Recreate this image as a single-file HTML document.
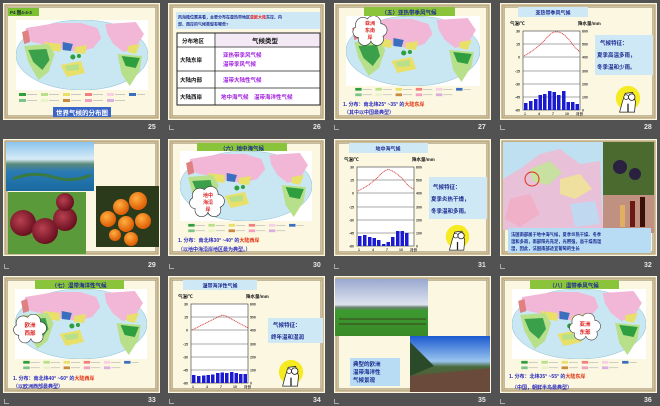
<!DOCTYPE html>
<html><head><meta charset="utf-8"><style>
html,body{margin:0;padding:0;background:#525252;width:660px;height:406px;overflow:hidden;font-family:"Liberation Sans","Noto Sans CJK SC",sans-serif}
.s{position:absolute;width:157px;height:117px}
.n{position:absolute;color:#e6e6e6;font-size:7px;font-weight:bold}
.i{position:absolute;width:4px;height:4px;border:1px solid #aaa;border-top:none;border-right:none}
svg text{font-family:"Liberation Sans","Noto Sans CJK SC",sans-serif;font-weight:bold}
</style></head><body>
<svg width="0" height="0" style="position:absolute">
<defs>
<symbol id="fr" viewBox="0 0 157 117">
<rect x="0" y="0" width="157" height="117" fill="#fbf7e0"/>
<rect x="2.5" y="2.5" width="152" height="112" fill="none" stroke="#bfae86" stroke-width="2.5"/>
<rect x="4.3" y="4.3" width="148.4" height="108.4" fill="none" stroke="#8f7f5c" stroke-width="0.5"/>
</symbol>
<symbol id="m" viewBox="0 0 130 70" preserveAspectRatio="none">
<rect width="130" height="70" fill="#fff"/>
<ellipse cx="65" cy="35" rx="65" ry="35" fill="#c8e7f3" stroke="#9bc7d6" stroke-width="0.6"/>
<path d="M10 8 L40 3 L64 3 L80 8 L84 18 L76 28 L62 32 L48 30 L34 26 L16 22 L8 16Z" fill="#f2b6d6"/>
<path d="M28 22 L44 24 L44 32 L30 30Z" fill="#e9e06a"/>
<path d="M46 22 L56 24 L54 31 L46 30Z" fill="#3a6fc0"/>
<path d="M58 27 L70 25 L68 34 L58 33Z" fill="#e9e06a"/>
<path d="M88 4 L118 2 L126 14 L118 28 L106 32 L96 24 L90 14Z" fill="#f2b6d6"/>
<path d="M110 26 L122 24 L118 34 L110 32Z" fill="#e9e06a"/>
<path d="M8 26 L32 24 L38 34 L32 52 L22 60 L12 42Z" fill="#b8e08a"/>
<path d="M12 30 L30 29 L33 40 L26 50 L17 42Z" fill="#3aa04a"/>
<path d="M100 34 L124 36 L122 50 L112 66 L104 54Z" fill="#b8e08a"/>
<path d="M104 36 L122 38 L118 48 L108 46Z" fill="#2e9e3e"/>
<path d="M44 45 L64 41 L68 53 L50 57Z" fill="#e9e06a"/>
<path d="M48 46 L62 44 L62 50 L50 51Z" fill="#b8e08a"/>
<circle cx="56" cy="37" r="2.5" fill="#2e9e3e"/><circle cx="62" cy="36" r="2" fill="#2e9e3e"/>
<path d="M6 12 L12 10 L14 22 L8 24Z" fill="#e08080"/>
</symbol>
<symbol id="lg" viewBox="0 0 130 12">
<rect x="2" y="1" width="7" height="3" fill="#2e9e3e"/>
<rect x="24" y="1" width="7" height="3" fill="#b8e08a"/><rect x="46" y="1" width="7" height="3" fill="#e9e06a"/>
<rect x="68" y="1" width="7" height="3" fill="#f08080"/><rect x="90" y="1" width="7" height="3" fill="#f8d0e4"/><rect x="112" y="1" width="7" height="3" fill="#3a6fc0"/>
<rect x="2" y="7" width="7" height="3" fill="#7cc48a"/><rect x="24" y="7" width="7" height="3" fill="#e8f4c8"/><rect x="46" y="7" width="7" height="3" fill="#c88a40"/>
<rect x="68" y="7" width="7" height="3" fill="#f0a0c0"/><rect x="90" y="7" width="7" height="3" fill="#d8b0e0"/>
<g stroke="#aaa" stroke-width="0.6"><line x1="10" y1="2.5" x2="20" y2="2.5"/><line x1="32" y1="2.5" x2="42" y2="2.5"/><line x1="54" y1="2.5" x2="64" y2="2.5"/><line x1="76" y1="2.5" x2="86" y2="2.5"/><line x1="98" y1="2.5" x2="108" y2="2.5"/><line x1="120" y1="2.5" x2="128" y2="2.5"/><line x1="10" y1="8.5" x2="20" y2="8.5"/><line x1="32" y1="8.5" x2="42" y2="8.5"/><line x1="54" y1="8.5" x2="64" y2="8.5"/><line x1="76" y1="8.5" x2="86" y2="8.5"/><line x1="98" y1="8.5" x2="108" y2="8.5"/></g>
</symbol>
<symbol id="ct" viewBox="0 0 30 30">
<circle cx="15" cy="14" r="13" fill="#f6ea20"/>
<path d="M6 29 L9 18 L12 9 L20 8 L23 18 L22 29Z" fill="#fff" stroke="#222" stroke-width="0.8"/>
<circle cx="19" cy="13" r="3.5" fill="#fff" stroke="#222" stroke-width="0.9"/>
<circle cx="13" cy="13" r="2.5" fill="#fff" stroke="#222" stroke-width="0.8"/>
<path d="M15 20 L15 29" stroke="#222" stroke-width="1.4"/>
</symbol>
<symbol id="cl" viewBox="0 0 40 34">
<g fill="none" stroke="#333" stroke-width="1.4"><circle cx="12" cy="10" r="8"/><circle cx="24" cy="8" r="8"/><circle cx="32" cy="16" r="7"/><circle cx="28" cy="26" r="7"/><circle cx="14" cy="26" r="7"/><circle cx="7" cy="18" r="6"/></g>
<g fill="#fff"><circle cx="12" cy="10" r="8"/><circle cx="24" cy="8" r="8"/><circle cx="32" cy="16" r="7"/><circle cx="28" cy="26" r="7"/><circle cx="14" cy="26" r="7"/><circle cx="7" cy="18" r="6"/><circle cx="20" cy="18" r="10"/></g>
</symbol>
<symbol id="ax" viewBox="0 0 157 117">
<rect x="23" y="28" width="57" height="79" fill="#fff" stroke="#333" stroke-width="0.6"/>
<g stroke="#555" stroke-width="0.5"><line x1="23" y1="41" x2="80" y2="41"/><line x1="23" y1="54" x2="80" y2="54"/><line x1="23" y1="68" x2="80" y2="68"/><line x1="23" y1="81" x2="80" y2="81"/><line x1="23" y1="94" x2="80" y2="94"/></g>
<g font-size="3.5" fill="#333" font-weight="normal" text-anchor="end"><text x="20" y="29.5">30</text><text x="20" y="42.5">15</text><text x="20" y="55.5">0</text><text x="20" y="69.5">-15</text><text x="20" y="82.5">-30</text><text x="20" y="95.5">-45</text><text x="20" y="108.5">-60</text></g>
<g font-size="3.5" fill="#333"><text x="82" y="29.5">600</text><text x="82" y="42.5">500</text><text x="82" y="55.5">400</text><text x="82" y="69.5">300</text><text x="82" y="82.5">200</text><text x="82" y="95.5">100</text><text x="82" y="108.5">0</text></g>
<g font-size="3.5" fill="#333"><text x="24" y="112">1</text><text x="38" y="112">4</text><text x="52" y="112">7</text><text x="65" y="112">10</text><text x="76" y="112">月份</text></g>
<text x="10" y="22" font-size="4.5" fill="#111">气温/℃</text>
<text x="78" y="22" font-size="4.5" fill="#111">降水量/mm</text>
</symbol>
</defs></svg>

<!-- Slide 25 -->
<svg class="s" style="left:3px;top:3px" viewBox="0 0 157 117"><use href="#fr"/>
<rect x="5" y="5" width="31" height="8" fill="#7cc230"/><text x="7" y="11" font-size="4.5" fill="#123">P4 图4-4-3</text>
<use href="#m" x="13" y="17" width="132" height="70"/>
<use href="#lg" x="14" y="89" width="130" height="12"/>
<rect x="50" y="104" width="58" height="10" fill="#3a66c8"/><text x="79" y="112" font-size="6.5" fill="#fff" text-anchor="middle">世界气候的分布图</text>
</svg>
<div class="n" style="left:148px;top:124px">25</div>

<!-- Slide 26 -->
<svg class="s" style="left:168px;top:3px" viewBox="0 0 157 117"><use href="#fr"/>
<rect x="8" y="9" width="144" height="17" fill="#cfe8f6"/>
<text x="10" y="15.5" font-size="4" fill="#1a2a90">风海陆位置来看，主要分布在亚热带地区<tspan fill="#e02020">亚欧大陆</tspan>东岸、内</text>
<text x="10" y="22.5" font-size="4" fill="#1a2a90">部、西岸的气候类型有哪些?</text>
<rect x="9" y="30" width="143" height="72" fill="#fff" stroke="#222" stroke-width="1"/>
<rect x="48" y="30.5" width="103.5" height="13" fill="#f3eaf5"/>
<g stroke="#222" stroke-width="0.8"><line x1="47" y1="30" x2="47" y2="102"/><line x1="9" y1="44" x2="152" y2="44"/><line x1="9" y1="68" x2="152" y2="68"/><line x1="9" y1="85" x2="152" y2="85"/></g>
<text x="14" y="40" font-size="5.5" fill="#111">分布地区</text><text x="84" y="40" font-size="6.5" fill="#111">气候类型</text>
<text x="12" y="59" font-size="5.5" fill="#111">大陆东岸</text><text x="12" y="79" font-size="5.5" fill="#111">大陆内部</text><text x="12" y="96" font-size="5.5" fill="#111">大陆西岸</text>
<g font-size="5.5" fill="#a020e0"><text x="55" y="54">亚热带季风气候</text><text x="55" y="63">温带季风气候</text><text x="55" y="79">温带大陆性气候</text><text x="53" y="96">地中海气候　温带海洋性气候</text></g>
</svg>
<div class="n" style="left:313px;top:124px">26</div><div class="i" style="left:169px;top:125px"></div>

<!-- Slide 27 -->
<svg class="s" style="left:334px;top:3px" viewBox="0 0 157 117"><use href="#fr"/>
<rect x="30" y="4" width="91" height="10" fill="#8ac43a"/><text x="75" y="11.5" font-size="5.5" fill="#1a2a90" text-anchor="middle">（五）亚热带季风气候</text>
<use href="#m" x="12" y="13" width="134" height="70"/>
<use href="#lg" x="12" y="84" width="134" height="11"/>
<use href="#cl" x="18" y="13" width="36" height="30"/>
<text x="36" y="22" font-size="5" fill="#e02020" text-anchor="middle">亚洲</text><text x="36" y="29" font-size="5" fill="#e02020" text-anchor="middle">东南</text><text x="36" y="36" font-size="5" fill="#e02020" text-anchor="middle">岸</text>
<text x="9" y="103" font-size="5" fill="#2a2ac0">1. 分布：南北纬25° ~35° 的<tspan fill="#e03010">大陆东岸</tspan></text>
<text x="10" y="111" font-size="5" fill="#2a2ac0">（其中以中国最典型）</text>
</svg>
<div class="n" style="left:478px;top:124px">27</div><div class="i" style="left:334px;top:125px"></div>

<!-- Slide 28 -->
<svg class="s" style="left:500px;top:3px" viewBox="0 0 157 117"><use href="#fr"/>
<rect x="18" y="4" width="70" height="10" fill="#cfe8f6"/><text x="53" y="11.5" font-size="5" fill="#1a2a90" text-anchor="middle">亚热带季风气候</text>
<use href="#ax"/>
<g fill="#1a1ad0"><rect x="24" y="100" width="3.5" height="7"/><rect x="29" y="98" width="3.5" height="9"/><rect x="34" y="96" width="3.5" height="11"/><rect x="38.5" y="92" width="3.5" height="15"/><rect x="43" y="91" width="3.5" height="16"/><rect x="48" y="88" width="3.5" height="19"/><rect x="52.5" y="89" width="3.5" height="18"/><rect x="57" y="92" width="3.5" height="15"/><rect x="62" y="88" width="3.5" height="19"/><rect x="66.5" y="99" width="3.5" height="8"/><rect x="71" y="99" width="3.5" height="8"/><rect x="75.5" y="101" width="3.5" height="6"/></g>
<path d="M24 53 Q35 47 44 38 Q52 28 56 29 Q62 28 70 38 Q76 46 80 49" fill="none" stroke="#d03030" stroke-width="0.8" stroke-dasharray="1.2 0.6"/>
<rect x="95" y="32" width="58" height="40" fill="#cfe8f6"/>
<text x="100" y="42" font-size="5.5" fill="#1a2a90">气候特征：</text><text x="97" y="54" font-size="5.5" fill="#1a2a90">夏季高温多雨，</text><text x="97" y="66" font-size="5.5" fill="#1a2a90">冬季温和少雨。</text>
<use href="#ct" x="114" y="82" width="28" height="28"/>
</svg>
<div class="n" style="left:644px;top:124px">28</div><div class="i" style="left:500px;top:125px"></div>

<!-- Slide 29 -->
<svg class="s" style="left:3px;top:139px" viewBox="0 0 157 117"><use href="#fr"/>
<defs><linearGradient id="lk" x1="0" y1="0" x2="0" y2="1"><stop offset="0" stop-color="#8ac4ee"/><stop offset="0.35" stop-color="#d8ecf6"/><stop offset="0.45" stop-color="#5a8a7a"/><stop offset="0.6" stop-color="#2a7ab4"/><stop offset="1" stop-color="#1a6aa0"/></linearGradient>
<radialGradient id="ym" cx="0.4" cy="0.4" r="0.6"><stop offset="0" stop-color="#b84050"/><stop offset="1" stop-color="#6a1020"/></radialGradient>
<radialGradient id="og" cx="0.4" cy="0.35" r="0.6"><stop offset="0" stop-color="#ffb040"/><stop offset="1" stop-color="#e06008"/></radialGradient></defs>
<rect x="3" y="3" width="88" height="49" fill="url(#lk)"/>
<path d="M10 40 Q30 32 50 38 Q70 44 88 36" stroke="#3a7a40" stroke-width="3" fill="none"/>
<rect x="5" y="53" width="78" height="62" fill="#5a9a3a"/>
<circle cx="20" cy="84" r="13" fill="url(#ym)"/><circle cx="42" cy="92" r="13" fill="url(#ym)"/><circle cx="62" cy="80" r="12" fill="url(#ym)"/><circle cx="62" cy="63" r="9" fill="url(#ym)"/>
<rect x="93" y="47" width="63" height="61" fill="#2a3a1a"/>
<circle cx="105" cy="80" r="8" fill="url(#og)"/><circle cx="118" cy="68" r="8" fill="url(#og)"/><circle cx="135" cy="62" r="9" fill="url(#og)"/><circle cx="123" cy="85" r="8" fill="url(#og)"/><circle cx="140" cy="82" r="8" fill="url(#og)"/><circle cx="128" cy="100" r="7" fill="url(#og)"/><circle cx="112" cy="96" r="6" fill="url(#og)"/>
</svg>
<div class="n" style="left:148px;top:262px">29</div><div class="i" style="left:4px;top:264px"></div>

<!-- Slide 30 -->
<svg class="s" style="left:168px;top:139px" viewBox="0 0 157 117"><use href="#fr"/>
<rect x="29" y="4" width="90" height="10" fill="#8ac43a"/><text x="74" y="11.5" font-size="5.5" fill="#1a2a90" text-anchor="middle">（六）地中海气候</text>
<use href="#m" x="12" y="12" width="132" height="70"/>
<use href="#lg" x="12" y="84" width="132" height="11"/>
<use href="#cl" x="21" y="46" width="36" height="34"/>
<text x="40" y="58" font-size="5" fill="#e02020" text-anchor="middle">地中</text><text x="40" y="65" font-size="5" fill="#e02020" text-anchor="middle">海沿</text><text x="40" y="72" font-size="5" fill="#e02020" text-anchor="middle">岸</text>
<text x="10" y="103" font-size="5" fill="#2a2ac0">1. 分布：南北纬30° ~40° 的<tspan fill="#e03010">大陆西岸</tspan></text>
<text x="10" y="112" font-size="5" fill="#2a2ac0">（以地中海沿岸地区最为典型。）</text>
</svg>
<div class="n" style="left:313px;top:262px">30</div><div class="i" style="left:169px;top:264px"></div>

<!-- Slide 31 -->
<svg class="s" style="left:334px;top:139px" viewBox="0 0 157 117"><use href="#fr"/>
<rect x="15" y="4" width="79" height="10" fill="#cfe8f6"/><text x="54" y="11.5" font-size="5" fill="#1a2a90" text-anchor="middle">地中海气候</text>
<use href="#ax"/>
<g fill="#1a1ad0"><rect x="24" y="97" width="3.5" height="10"/><rect x="29" y="96" width="3.5" height="11"/><rect x="34" y="98" width="3.5" height="9"/><rect x="38.5" y="99" width="3.5" height="8"/><rect x="43" y="101" width="3.5" height="6"/><rect x="48" y="105" width="3.5" height="2"/><rect x="52.5" y="103" width="3.5" height="4"/><rect x="57" y="98" width="3.5" height="9"/><rect x="62" y="92" width="3.5" height="15"/><rect x="66.5" y="92" width="3.5" height="15"/><rect x="71" y="94" width="3.5" height="13"/></g>
<path d="M24 52 Q36 46 44 38 Q52 29 56 31 Q64 34 72 44 Q76 49 80 50" fill="none" stroke="#d03030" stroke-width="0.8" stroke-dasharray="1.2 0.6"/>
<rect x="95" y="38" width="58" height="42" fill="#cfe8f6"/>
<text x="99" y="50" font-size="5.5" fill="#1a2a90">气候特征：</text><text x="97" y="62" font-size="5.5" fill="#1a2a90">夏季炎热干燥，</text><text x="97" y="74" font-size="5.5" fill="#1a2a90">冬季温和多雨。</text>
<use href="#ct" x="110" y="85" width="27" height="27"/>
</svg>
<div class="n" style="left:478px;top:262px">31</div><div class="i" style="left:334px;top:264px"></div>

<!-- Slide 32 -->
<svg class="s" style="left:500px;top:139px" viewBox="0 0 157 117"><use href="#fr"/>
<rect x="3" y="3" width="100" height="88" fill="#bfe0f0"/>
<path d="M3 40 L20 30 L40 15 L60 10 L80 25 L100 22 L103 91 L3 91Z" fill="#e8c0d8"/>
<path d="M30 30 L50 22 L62 34 L48 46 L32 42Z" fill="#c8e0a0"/><path d="M60 40 L80 35 L92 50 L75 60 L60 55Z" fill="#f0e0a0"/>
<path d="M10 60 L30 55 L40 75 L20 88 L5 80Z" fill="#f0b0c8"/><path d="M70 65 L95 62 L100 85 L75 88Z" fill="#c0d8f0"/>
<circle cx="32" cy="40" r="7" fill="none" stroke="#e03010" stroke-width="1"/>
<rect x="103" y="3" width="51" height="53" fill="#4a6a30"/><circle cx="120" cy="28" r="7" fill="#2a2040"/><circle cx="135" cy="35" r="6" fill="#2a2040"/>
<rect x="103" y="56" width="51" height="38" fill="#c09080"/><rect x="130" y="62" width="5" height="26" fill="#6a1a10"/><rect x="140" y="58" width="5" height="30" fill="#3a1008"/><rect x="120" y="66" width="5" height="22" fill="#e0b060"/>
<rect x="8" y="89" width="143" height="25" fill="#b8dcf4"/>
<text x="11" y="97" font-size="4.3" fill="#1a2a90">法国南部属于地中海气候，夏季炎热干燥、冬季</text><text x="11" y="104" font-size="4.3" fill="#1a2a90">温和多雨，南部阳光充足，光照强，高干燥而温</text><text x="11" y="111" font-size="4.3" fill="#1a2a90">湿，因此，法国南部适宜葡萄的生长</text>
</svg>
<div class="n" style="left:644px;top:262px">32</div><div class="i" style="left:500px;top:264px"></div>

<!-- Slide 33 -->
<svg class="s" style="left:3px;top:276px" viewBox="0 0 157 117"><use href="#fr"/>
<rect x="32" y="4" width="89" height="10" fill="#8ac43a"/><text x="76" y="11.5" font-size="5.5" fill="#1a2a90" text-anchor="middle">（七）温带海洋性气候</text>
<use href="#m" x="12" y="13" width="132" height="70"/>
<use href="#lg" x="12" y="84" width="132" height="11"/>
<use href="#cl" x="10" y="36" width="34" height="34"/>
<text x="27" y="51" font-size="5.5" fill="#e02020" text-anchor="middle">欧洲</text><text x="27" y="59" font-size="5.5" fill="#e02020" text-anchor="middle">西部</text>
<text x="10" y="104" font-size="5" fill="#2a2ac0">1. 分布：南北纬40° ~60° 的<tspan fill="#e03010">大陆西岸</tspan></text>
<text x="10" y="112" font-size="5" fill="#2a2ac0">（以欧洲西部最典型）</text>
</svg>
<div class="n" style="left:148px;top:397px">33</div><div class="i" style="left:4px;top:399px"></div>

<!-- Slide 34 -->
<svg class="s" style="left:168px;top:276px" viewBox="0 0 157 117"><use href="#fr"/>
<rect x="15" y="4" width="74" height="10" fill="#cfe8f6"/><text x="52" y="11.5" font-size="5" fill="#1a2a90" text-anchor="middle">温带海洋性气候</text>
<use href="#ax" x="0" y="0" width="157" height="117"/>
<g fill="#1a1ad0"><rect x="24" y="99" width="3.5" height="8"/><rect x="29" y="100" width="3.5" height="7"/><rect x="34" y="99.5" width="3.5" height="7.5"/><rect x="38.5" y="99" width="3.5" height="8"/><rect x="43" y="98.5" width="3.5" height="8.5"/><rect x="48" y="97" width="3.5" height="10"/><rect x="52.5" y="96.5" width="3.5" height="10.5"/><rect x="57" y="97" width="3.5" height="10"/><rect x="62" y="96" width="3.5" height="11"/><rect x="66.5" y="97" width="3.5" height="10"/><rect x="71" y="98" width="3.5" height="9"/><rect x="75.5" y="98" width="3.5" height="9"/></g>
<path d="M24 54 L54 39 L58 40 L80 52" fill="none" stroke="#d03030" stroke-width="0.8" stroke-dasharray="1.2 0.6"/>
<rect x="100" y="42" width="55" height="25" fill="#cfe8f6"/>
<text x="105" y="51" font-size="5.5" fill="#1a2a90">气候特征：</text><text x="103" y="63" font-size="5.5" fill="#1a2a90">终年温和湿润</text>
<use href="#ct" x="109" y="83" width="28" height="28"/>
</svg>
<div class="n" style="left:313px;top:397px">34</div><div class="i" style="left:169px;top:399px"></div>

<!-- Slide 35 -->
<svg class="s" style="left:334px;top:276px" viewBox="0 0 157 117"><use href="#fr"/>
<defs><linearGradient id="sk" x1="0" y1="0" x2="0" y2="1"><stop offset="0" stop-color="#9aa8d0"/><stop offset="0.45" stop-color="#dde4ee"/><stop offset="0.5" stop-color="#6a8070"/><stop offset="0.55" stop-color="#3c9a30"/><stop offset="1" stop-color="#3a8a28"/></linearGradient>
<linearGradient id="sk2" x1="0" y1="0" x2="0" y2="1"><stop offset="0" stop-color="#1a5ad0"/><stop offset="0.45" stop-color="#9ac4ee"/><stop offset="0.55" stop-color="#4a6a3a"/><stop offset="1" stop-color="#5a4a3a"/></linearGradient></defs>
<rect x="1" y="3" width="93" height="57" fill="url(#sk)"/>
<g stroke="#3a2a1a" stroke-width="0.8"><line x1="5" y1="43" x2="92" y2="43"/><line x1="5" y1="48" x2="92" y2="48"/></g>
<rect x="76" y="60" width="80" height="56" fill="url(#sk2)"/>
<path d="M76 66 L100 90 L76 100Z" fill="#2a4a2a"/><path d="M76 100 L156 92 L156 116 L76 116Z" fill="#6a4a3a"/>
<rect x="16" y="82" width="50" height="28" fill="#b8dcf4"/>
<text x="19" y="90" font-size="5.5" fill="#1a2a90">典型的欧洲</text><text x="19" y="98" font-size="5.5" fill="#1a2a90">温带海洋性</text><text x="19" y="106" font-size="5.5" fill="#1a2a90">气候景观</text>
</svg>
<div class="n" style="left:478px;top:397px">35</div><div class="i" style="left:334px;top:399px"></div>

<!-- Slide 36 -->
<svg class="s" style="left:500px;top:276px" viewBox="0 0 157 117"><use href="#fr"/>
<rect x="30" y="4" width="89" height="10" fill="#8ac43a"/><text x="74" y="11.5" font-size="5.5" fill="#1a2a90" text-anchor="middle">（八）温带季风气候</text>
<use href="#m" x="12" y="13" width="134" height="70"/>
<use href="#lg" x="12" y="84" width="134" height="11"/>
<use href="#cl" x="69" y="36" width="32" height="30"/>
<text x="85" y="50" font-size="5.5" fill="#e02020" text-anchor="middle">亚洲</text><text x="85" y="58" font-size="5.5" fill="#e02020" text-anchor="middle">东部</text>
<text x="9" y="102" font-size="5" fill="#2a2ac0">1. 分布：北纬35° ~55° 的<tspan fill="#e03010">大陆东岸</tspan></text>
<text x="12" y="113" font-size="5" fill="#2a2ac0">（中国，朝鲜半岛最典型）</text>
</svg>
<div class="n" style="left:644px;top:397px">36</div><div class="i" style="left:500px;top:399px"></div>
</body></html>
